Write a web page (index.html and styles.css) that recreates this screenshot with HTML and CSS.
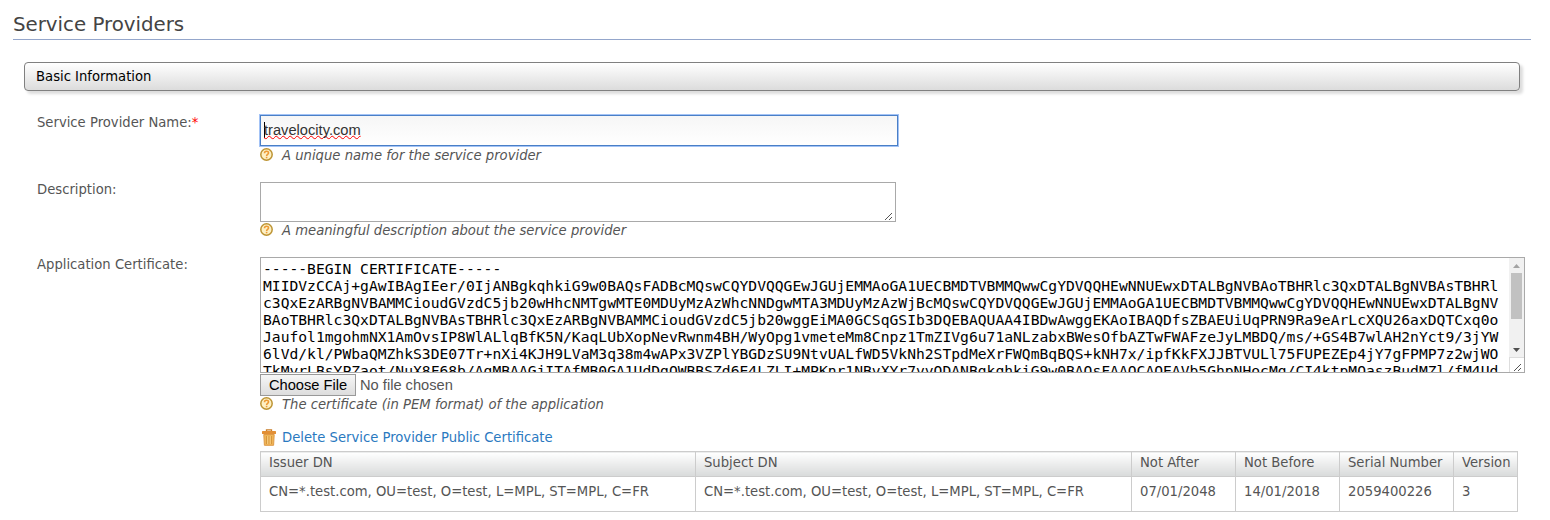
FILE: index.html
```
<!DOCTYPE html>
<html lang="en">
<head>
<meta charset="utf-8">
<title>Service Providers</title>
<link rel="stylesheet" href="styles.css">
</head>
<body>
<svg width="0" height="0" class="defs">
  <defs>
    <symbol id="help" viewBox="0 0 13 13">
      <circle cx="6.5" cy="6.5" r="5.7" fill="#fdf0c4" stroke="#bd9434" stroke-width="1.5"/>
      <path d="M4.5 5.2C4.5 2.6 8.6 2.7 8.5 5C8.4 6.3 6.6 6.3 6.6 8" fill="none" stroke="#ee9a35" stroke-width="1.6"/>
      <rect x="5.8" y="8.8" width="1.6" height="1.5" fill="#ee9a35"/>
    </symbol>
    <symbol id="grip" viewBox="0 0 8 8">
      <path d="M0 7h1v1H0zM1 6h1v1H1zM2 5h1v1H2zM3 4h1v1H3zM4 3h1v1H4zM5 2h1v1H5zM6 1h1v1H6zM4 7h1v1H4zM5 6h1v1H5zM6 5h1v1H6z" fill="#555"/>
    </symbol>
  </defs>
</svg>
<h1 class="title">Service Providers</h1>
<main class="work">
  <h2 class="section">Basic Information</h2>
  <div class="row row-name">
    <div class="label">Service Provider Name:<span class="required">*</span></div>
    <div class="field">
      <div class="input"><span class="caret"></span><span class="typed">travelocity.com</span></div>
      <div class="hint hint-first"><svg class="help"><use href="#help"/></svg><span>A unique name for the service provider</span></div>
    </div>
  </div>
  <div class="row row-desc">
    <div class="label">Description:</div>
    <div class="field">
      <div class="area"><svg class="grip"><use href="#grip"/></svg></div>
      <div class="hint"><svg class="help"><use href="#help"/></svg><span>A meaningful description about the service provider</span></div>
    </div>
  </div>
  <div class="row">
    <div class="label">Application Certificate:</div>
    <div class="field">
      <div class="cert">
<pre class="pem">-----BEGIN CERTIFICATE-----
MIIDVzCCAj+gAwIBAgIEer/0IjANBgkqhkiG9w0BAQsFADBcMQswCQYDVQQGEwJGUjEMMAoGA1UECBMDTVBMMQwwCgYDVQQHEwNNUEwxDTALBgNVBAoTBHRlc3QxDTALBgNVBAsTBHRl
c3QxEzARBgNVBAMMCioudGVzdC5jb20wHhcNMTgwMTE0MDUyMzAzWhcNNDgwMTA3MDUyMzAzWjBcMQswCQYDVQQGEwJGUjEMMAoGA1UECBMDTVBMMQwwCgYDVQQHEwNNUEwxDTALBgNV
BAoTBHRlc3QxDTALBgNVBAsTBHRlc3QxEzARBgNVBAMMCioudGVzdC5jb20wggEiMA0GCSqGSIb3DQEBAQUAA4IBDwAwggEKAoIBAQDfsZBAEUiUqPRN9Ra9eArLcXQU26axDQTCxq0o
Jaufol1mgohmNX1AmOvsIP8WlALlqBfK5N/KaqLUbXopNevRwnm4BH/WyOpg1vmeteMm8Cnpz1TmZIVg6u71aNLzabxBWesOfbAZTwFWAFzeJyLMBDQ/ms/+GS4B7wlAH2nYct9/3jYW
6lVd/kl/PWbaQMZhkS3DE07Tr+nXi4KJH9LVaM3q38m4wAPx3VZPlYBGDzSU9NtvUALfWD5VkNh2STpdMeXrFWQmBqBQS+kNH7x/ipfKkFXJJBTVULl75FUPEZEp4jY7gFPMP7z2wjWO
TkMvrLBsYPZaot/NuX8F68b/AgMBAAGjITAfMB0GA1UdDgQWBBSZd6E4LZLI+MPKnr1NBvXYr7vvQDANBgkqhkiG9w0BAQsFAAOCAQEAVb5GhpNHocMg/CI4ktpMOaszBudMZl/fM4Ud</pre>
        <div class="scroll">
          <div class="track">
            <svg class="arrow" viewBox="0 0 7 4"><path d="M0 4L3.5 0L7 4Z" fill="#a3a3a3"/></svg>
            <div class="thumb"></div>
            <svg class="arrow down" viewBox="0 0 7 4"><path d="M0 0H7L3.5 4Z" fill="#505050"/></svg>
          </div>
          <div class="corner"><svg class="grip"><use href="#grip"/></svg></div>
        </div>
      </div>
      <div class="file"><span class="choose">Choose File</span><span class="nofile">No file chosen</span></div>
      <div class="hint"><svg class="help"><use href="#help"/></svg><span>The certificate (in PEM format) of the application</span></div>
      <div class="delete">
        <svg class="trash" viewBox="0 0 16 17">
          <path d="M5.5 2V.8h5V2" fill="none" stroke="#c77d28" stroke-width="1.3"/>
          <rect x="1" y="2" width="14" height="3" rx=".6" fill="#e28f35"/>
          <path d="M2.8 5.5h10.4l-.6 10.8H3.4Z" fill="#efb555" stroke="#df9a48"/>
          <path d="M5.5 7v8M8 7v8M10.5 7v8" stroke="#d3913b" stroke-width=".9"/>
          <path d="M6.7 7v8M9.2 7v8" stroke="#f9d28c" stroke-width=".8"/>
        </svg>
        <a class="link">Delete Service Provider Public Certificate</a>
      </div>
      <table class="grid">
        <colgroup><col class="c-dn"><col class="c-sub"><col class="c-date"><col class="c-date"><col class="c-serial"><col class="c-ver"></colgroup>
        <thead><tr><th>Issuer DN</th><th>Subject DN</th><th>Not After</th><th>Not Before</th><th>Serial Number</th><th>Version</th></tr></thead>
        <tbody><tr><td>CN=*.test.com, OU=test, O=test, L=MPL, ST=MPL, C=FR</td><td>CN=*.test.com, OU=test, O=test, L=MPL, ST=MPL, C=FR</td><td>07/01/2048</td><td>14/01/2018</td><td>2059400226</td><td>3</td></tr></tbody>
      </table>
    </div>
  </div>
</main>
</body>
</html>
```
FILE: styles.css
```
* { box-sizing: border-box; }
body { margin: 0; height: 520px; overflow: hidden; background: #fff; color: #555; font: 13.2px/17px "DejaVu Sans", sans-serif; }
svg { display: block; flex: none; }
.defs { position: absolute; }
.title { margin: 0 19px 0 13px; height: 40px; padding-top: 13px; border-bottom: 1px solid #94a6cb; font-size: 19.8px; line-height: 24px; font-weight: normal; color: #444; }
.work { padding: 22px 30px 0 24px; }
.section { margin: 0; height: 29px; padding: 5px 11px; border: 1px solid #808080; border-radius: 4px; background: linear-gradient(#fff, #dcdcdc); box-shadow: 3px 3px 3px #ddd; color: #000; font-size: 13.2px; line-height: 17px; font-weight: normal; }
.row { display: flex; padding-left: 13px; }
.row-name { margin-top: 23px; height: 67px; }
.row-desc { height: 75px; }
.label { width: 223px; flex: none; white-space: nowrap; }
.required { color: #f00; }
.field { width: 1266px; flex: none; }
.input { display: flex; align-items: center; width: 638px; height: 31px; margin-top: 1px; padding: 0 0 2px 3px; border: 1px solid #4a7fc6; box-shadow: 0 0 0 1px #a3c3f6; background: linear-gradient(#f6f6f6, #fff); color: #333; font: 14.667px/18px "Liberation Sans", sans-serif; }
.caret { width: 1px; height: 16px; background: #000; }
.typed { margin-left: -1px; text-decoration: underline wavy #f00 1px; text-decoration-skip-ink: none; text-underline-offset: 0; }
.hint { display: flex; align-items: center; height: 17px; gap: 9px; font-style: italic; white-space: nowrap; }
.hint-first { margin-top: 1px; }
.help { width: 13px; height: 13px; margin-bottom: 2px; }
.area { display: flex; align-items: flex-end; justify-content: flex-end; width: 636px; height: 40px; margin-top: 1px; padding: 1px 2px; border: 1px solid #a9a9a9; }
.grip { width: 8px; height: 8px; }
.cert { display: flex; width: 1265px; height: 116px; margin-top: 1px; border: 1px solid #a9a9a9; overflow: hidden; }
.pem { flex: 1; min-width: 0; margin: 0; padding: 2px 0 0 2px; overflow: hidden; color: #000; font: 14.667px/17px "DejaVu Sans Mono", monospace; }
.scroll { width: 15px; flex: none; }
.track { display: flex; flex-direction: column; align-items: center; height: 99px; padding-top: 6px; background: #f1f1f1; }
.arrow { width: 7px; height: 4px; }
.thumb { width: 11px; height: 46px; margin-top: 5px; background: #c1c1c1; }
.down { margin-top: auto; margin-bottom: 5px; }
.corner { display: flex; align-items: flex-end; justify-content: flex-end; height: 15px; padding: 1px 2px; border: solid #ddd; border-width: 1px 0 0 1px; }
.file { display: flex; align-items: center; height: 22px; margin-top: 1px; gap: 4px; font: 14.667px/18px "Liberation Sans", sans-serif; }
.choose { width: 96px; height: 22px; border: 1px solid #999; background: linear-gradient(#f6f6f6, #ddd); color: #000; text-align: center; line-height: 20px; }
.delete { display: flex; align-items: center; gap: 5px; height: 17px; margin-top: 16px; }
.trash { width: 16px; height: 17px; margin-left: 1px; }
.link { color: #2a79bf; white-space: nowrap; }
.grid { width: 1258px; margin-top: 5px; border-collapse: collapse; table-layout: fixed; }
.c-dn { width: 435px; }
.c-sub { width: 436px; }
.c-date { width: 104px; }
.c-serial { width: 114px; }
.c-ver { width: 64px; }
.grid th, .grid td { padding: 0 8px; border: 1px solid #ccc; text-align: left; vertical-align: top; white-space: nowrap; font-weight: normal; }
.grid th { height: 25px; padding-top: 2px; background: linear-gradient(#fff, #d8dada); }
.grid td { height: 35px; padding-top: 6px; }
```
